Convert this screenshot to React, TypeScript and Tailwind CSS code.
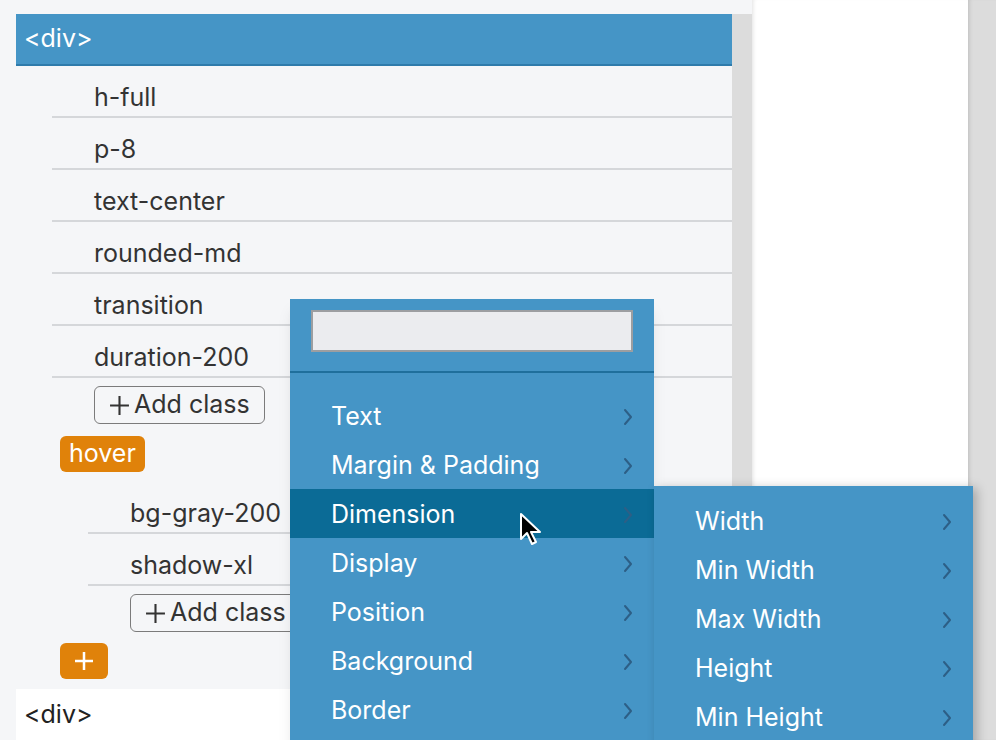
import React from 'react';

const FONT = { fontFamily: 'Inter, "Open Sans", "Liberation Sans", sans-serif' };

const classes = ['h-full', 'p-8', 'text-center', 'rounded-md', 'transition', 'duration-200'];
const hoverClasses = ['bg-gray-200', 'shadow-xl'];
const menuItems = ['Text', 'Margin & Padding', 'Dimension', 'Display', 'Position', 'Background', 'Border'];
const subItems = ['Width', 'Min Width', 'Max Width', 'Height', 'Min Height'];

const Chevron = () => (
  <svg width="10" height="18" viewBox="0 0 10 18" fill="none" stroke="#2d5f86" strokeWidth="2" strokeLinecap="round" strokeLinejoin="round">
    <path d="M2 2l6 7-6 7" />
  </svg>
);

const AddClass = () => (
  <button className="flex items-center h-[38px] px-[14px] gap-[4px] rounded-md border-[1.5px] border-[#7b7b7b] text-[25px] text-[#333] bg-transparent whitespace-nowrap">
    <svg width="21" height="21" viewBox="0 0 20 20" stroke="#333" strokeWidth="2">
      <path d="M10 1v18M1 10h18" />
    </svg>
    <span>Add class</span>
  </button>
);

const ClassRow = ({ label }: { label: string }) => (
  <div className="h-[52px] flex items-end pb-[3px] pl-[42px] border-b-2 border-[#d5d7da] text-[25px] leading-[32px] text-[#333]">
    {label}
  </div>
);

export default function App() {
  return (
    <div className="relative w-[996px] h-[740px] overflow-hidden flex bg-white" style={FONT}>
      {/* tree panel */}
      <div className="w-[752px] h-full bg-[#f5f6f8] flex flex-col overflow-hidden">
        <div className="h-[14px] shrink-0" />
        <div className="flex flex-1 pl-4">
          <div className="w-[716px] flex flex-col shrink-0">
            <div className="h-[52px] shrink-0 flex items-center pl-2 bg-[#4595c6] border-b-2 border-[#2e7bab] text-white text-[25px]">
              &lt;div&gt;
            </div>
            <div className="ml-9">
              {classes.map(c => (
                <ClassRow key={c} label={c} />
              ))}
              <div className="pl-[42px] pt-2">
                <AddClass />
              </div>
            </div>
            <div className="pl-[44px] mt-[12px]">
              <span className="inline-flex items-center h-[36px] px-[9px] rounded-md bg-[#e0820a] text-white text-[25px]">hover</span>
            </div>
            <div className="ml-[72px] mt-[10px]">
              {hoverClasses.map(c => (
                <ClassRow key={c} label={c} />
              ))}
              <div className="pl-[42px] pt-2">
                <AddClass />
              </div>
            </div>
            <div className="pl-[44px] mt-[11px]">
              <span className="inline-flex items-center justify-center h-[36px] w-[48px] rounded-md bg-[#e0820a]">
                <svg width="20" height="20" viewBox="0 0 20 20" stroke="white" strokeWidth="2.5">
                  <path d="M10 1v18M1 10h18" />
                </svg>
              </span>
            </div>
            <div className="mt-[10px] h-[52px] shrink-0 bg-white flex items-center pl-2 text-[25px] text-[#222]">
              &lt;div&gt;
            </div>
          </div>
          <div className="w-5 bg-[#dcdcdc]" />
        </div>
      </div>
      {/* canvas */}
      <div className="w-[216px] h-full bg-white shadow-[inset_4px_0_4px_-3px_rgba(0,0,0,0.12)]" />
      <div className="flex-1 h-full bg-[#dcdcdc] shadow-[inset_4px_0_4px_-3px_rgba(0,0,0,0.15)]" />

      {/* context menu */}
      <div className="absolute left-[290px] top-[299px] w-[364px] h-[460px] bg-[#4595c6] shadow-lg">
        <div className="px-[21px] pt-[11px] pb-[19px]">
          <div className="h-[42px] bg-[#ebecef] border-2 border-[#9c9ea1]" />
        </div>
        <div className="h-[2px] bg-[#1f6f9c]" />
        <div className="pt-[18px]">
          {menuItems.map(item => (
            <div
              key={item}
              className={`h-[49px] flex items-center justify-between pl-[41px] pr-[21px] pt-[3px] text-white text-[25px] ${item === 'Dimension' ? 'bg-[#0b6b96]' : ''}`}
            >
              <span>{item}</span>
              <Chevron />
            </div>
          ))}
        </div>
      </div>

      {/* submenu */}
      <div className="absolute left-[654px] top-[486px] w-[319px] h-[270px] bg-[#4595c6] shadow-[4px_2px_10px_rgba(0,0,0,0.25)] pt-[10px]">
        {subItems.map(item => (
          <div key={item} className="h-[49px] flex items-center justify-between pl-[41px] pr-[21px] pt-[2px] text-white text-[25px]">
            <span>{item}</span>
            <Chevron />
          </div>
        ))}
      </div>

      {/* cursor */}
      <svg className="absolute left-[519px] top-[512px]" width="24" height="34" viewBox="0 0 24 34">
        <path d="M2 2v25l6-6 5 11 4-2-5-10h9z" fill="black" stroke="white" strokeWidth="2" strokeLinejoin="round" />
      </svg>
    </div>
  );
}
